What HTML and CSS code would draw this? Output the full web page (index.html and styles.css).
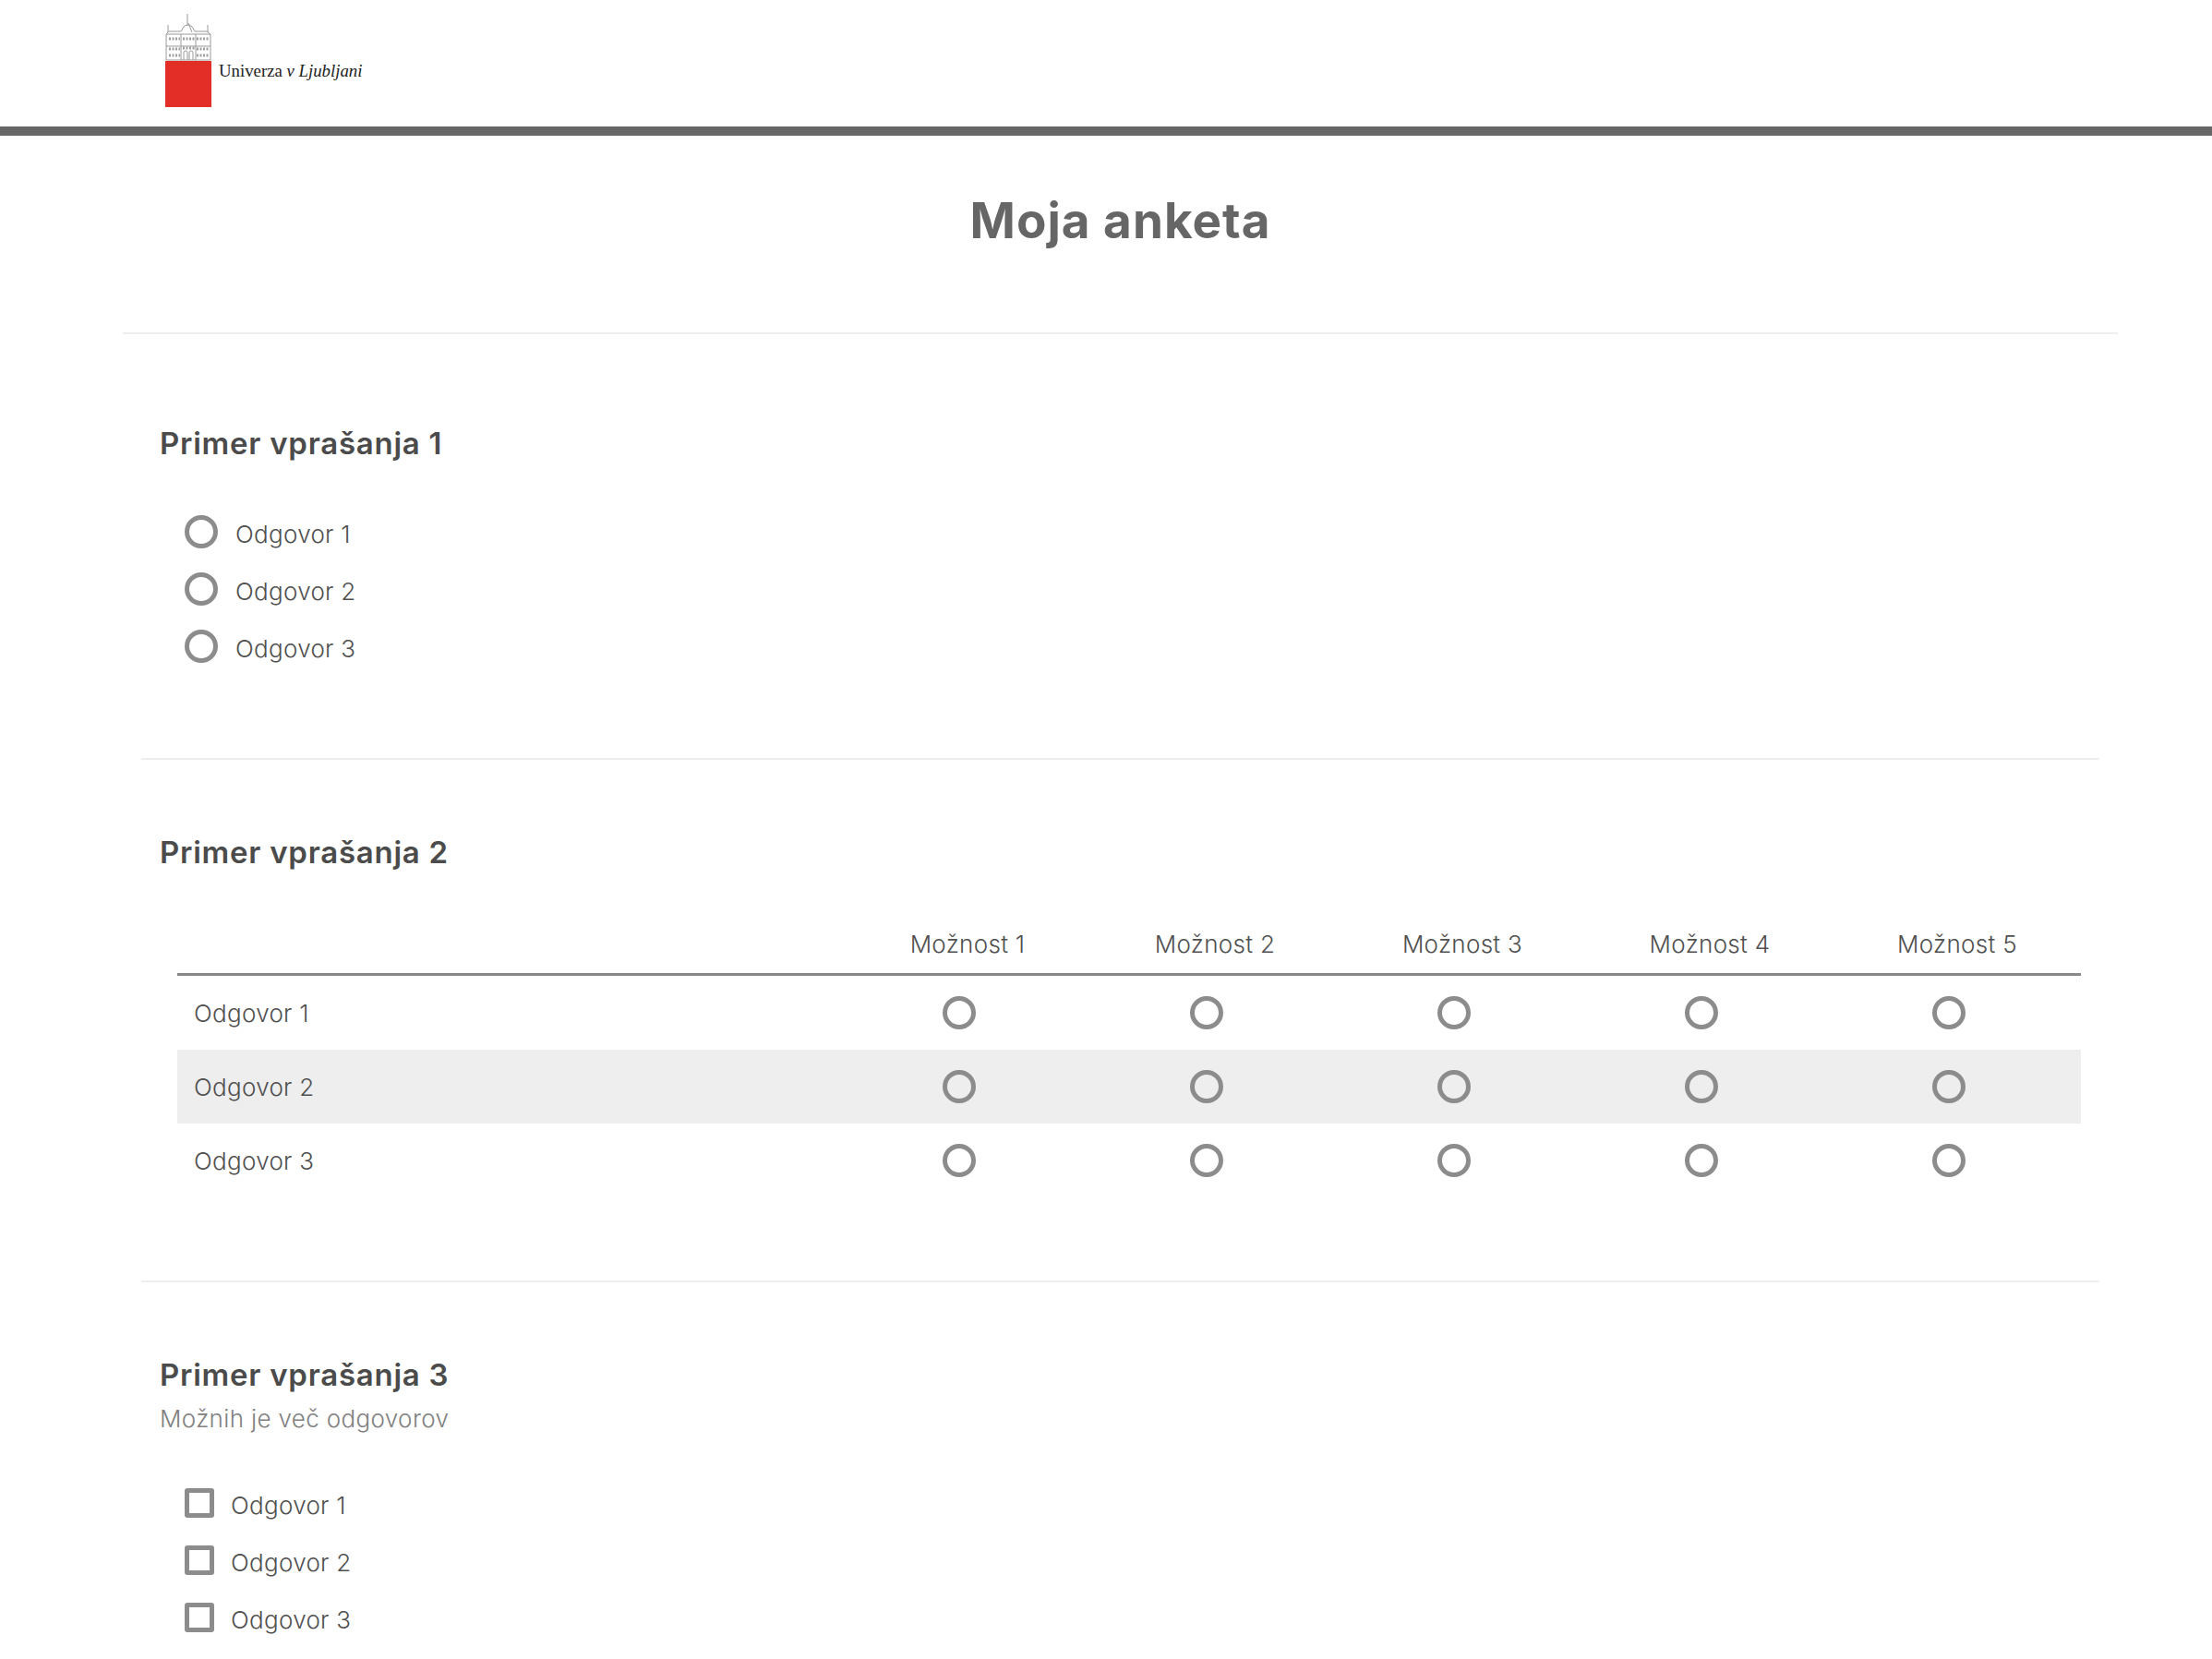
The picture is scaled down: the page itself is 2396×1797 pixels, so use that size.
FILE: index.html
```html
<!DOCTYPE html>
<html lang="sl">
<head>
    <meta charset="UTF-8">
    <meta name="viewport" content="width=device-width, initial-scale=1.0">
    <title>Moja anketa</title>
    <link rel="stylesheet" href="styles.css">
</head>
<body>

    <header class="site-header">
        <div class="logo">
            <div class="logo-mark">
                <svg class="logo-building" viewBox="0 0 50 51" width="50" height="51">
                    <g fill="none" stroke="#9a9a9a" stroke-width="1">
                        <path d="M24 0V13M25 10l4 10M3 12v8M46 12v8"/>
                        <path d="M1 22l3-3h13l3-5a6 6 0 0 1 9 0l3 5h13l4 3"/>
                        <path d="M1 22h48M1 35h48M1 50h48"/>
                        <path d="M1 22v28M49 22v28M17 22v28M33 22v28"/>
                        <path d="M20 50v-8a2 2 0 0 1 4 0v8M26 50v-8a2 2 0 0 1 4 0v8"/>
                    </g>
                    <g fill="none" stroke="#a0a0a0" stroke-width="3" stroke-dasharray="2 1.5">
                        <path d="M4 27h12M34 27h13M4 38h12M34 38h13M4 45h12M34 45h13"/>
                        <path d="M19 27h13M19 37h13"/>
                    </g>
                </svg>
                <div class="logo-red"></div>
            </div>
            <div class="logo-text">Univerza <i>v Ljubljani</i></div>
        </div>
    </header>

    <main class="survey">
        <div class="survey-title">
            <h1>Moja anketa</h1>
        </div>

        <section class="question question-first">
            <h2>Primer vprašanja 1</h2>
            <div class="options">
                <label class="option"><input type="radio" name="q1"><span>Odgovor 1</span></label>
                <label class="option"><input type="radio" name="q1"><span>Odgovor 2</span></label>
                <label class="option"><input type="radio" name="q1"><span>Odgovor 3</span></label>
            </div>
        </section>

        <section class="question question-grid">
            <h2>Primer vprašanja 2</h2>
            <table class="grid">
                <thead>
                    <tr>
                        <th></th>
                        <th>Možnost 1</th>
                        <th>Možnost 2</th>
                        <th>Možnost 3</th>
                        <th>Možnost 4</th>
                        <th>Možnost 5</th>
                    </tr>
                </thead>
                <tbody>
                    <tr>
                        <td>Odgovor 1</td>
                        <td><input type="radio" name="g1"></td>
                        <td><input type="radio" name="g1"></td>
                        <td><input type="radio" name="g1"></td>
                        <td><input type="radio" name="g1"></td>
                        <td><input type="radio" name="g1"></td>
                    </tr>
                    <tr>
                        <td>Odgovor 2</td>
                        <td><input type="radio" name="g2"></td>
                        <td><input type="radio" name="g2"></td>
                        <td><input type="radio" name="g2"></td>
                        <td><input type="radio" name="g2"></td>
                        <td><input type="radio" name="g2"></td>
                    </tr>
                    <tr>
                        <td>Odgovor 3</td>
                        <td><input type="radio" name="g3"></td>
                        <td><input type="radio" name="g3"></td>
                        <td><input type="radio" name="g3"></td>
                        <td><input type="radio" name="g3"></td>
                        <td><input type="radio" name="g3"></td>
                    </tr>
                </tbody>
            </table>
        </section>

        <section class="question question-multi">
            <h2>Primer vprašanja 3</h2>
            <p class="hint">Možnih je več odgovorov</p>
            <div class="options options-check">
                <label class="option"><input type="checkbox"><span>Odgovor 1</span></label>
                <label class="option"><input type="checkbox"><span>Odgovor 2</span></label>
                <label class="option"><input type="checkbox"><span>Odgovor 3</span></label>
            </div>
        </section>
    </main>

</body>
</html>
```

FILE: styles.css
```css
* {
    margin: 0;
    padding: 0;
    box-sizing: border-box;
}

body {
    background: white;
    color: #505050;
    font-family: Inter, "Open Sans", sans-serif;
    font-size: 26px;
    overflow-x: hidden;
}

.site-header {
    height: 147px;
    border-bottom: 10px solid #666666;
    padding: 15px 0 0 179px;
}

.logo {
    display: flex;
    align-items: center;
    gap: 8px;
}

.logo-mark {
    width: 50px;
}

.logo-building {
    display: block;
}

.logo-red {
    height: 50px;
    background: #e32e28;
}

.logo-text {
    font-family: "Liberation Serif", serif;
    font-size: 18.8px;
    color: #222222;
    margin-top: 22px;
    white-space: nowrap;
}

.survey {
    width: 2161px;
    margin-left: 133px;
}

.survey-title {
    height: 215px;
    border-bottom: 2px solid #eeeeee;
    padding-top: 60px;
    text-align: center;
}

h1 {
    font-size: 53px;
    line-height: 64px;
    font-weight: 700;
    color: #666666;
    letter-spacing: 1px;
}

.question {
    margin: 0 20px;
    padding-left: 20px;
    border-bottom: 2px solid #eeeeee;
}

.question-first {
    height: 461px;
    padding-top: 96px;
}

.question-grid {
    height: 566px;
    padding-top: 78px;
}

.question-multi {
    border-bottom: none;
    padding-top: 78px;
}

h2 {
    font-size: 33px;
    line-height: 44px;
    font-weight: 600;
    color: #4b4b4b;
    letter-spacing: 0.75px;
}

.hint {
    font-size: 26px;
    line-height: 36px;
    font-weight: 300;
    color: #808080;
    letter-spacing: 0.35px;
    margin-top: 8px;
}

.options {
    margin-top: 56px;
    padding-left: 27px;
    display: flex;
    flex-direction: column;
    gap: 26px;
}

.options-check {
    margin-top: 55px;
}

.option {
    display: flex;
    align-items: center;
    height: 36px;
    font-weight: 300;
    letter-spacing: 0.3px;
}

input[type="radio"],
input[type="checkbox"] {
    appearance: none;
    display: block;
    flex: none;
    background: transparent;
    border: 5px solid #8c8c8c;
}

input[type="radio"] {
    width: 36px;
    height: 36px;
    border-radius: 50%;
}

input[type="checkbox"] {
    width: 32px;
    height: 32px;
    border-radius: 3px;
}

.option span {
    margin-left: 19px;
    margin-top: 4px;
}

.options-check .option span {
    margin-left: 18px;
}

.grid {
    width: 2062px;
    margin: 59px 0 0 19px;
    border-collapse: separate;
    border-spacing: 0;
    table-layout: fixed;
    font-weight: 300;
    letter-spacing: 0.3px;
}

.grid th {
    width: 268px;
    height: 53px;
    padding-bottom: 14px;
    font-weight: 300;
    border-bottom: 3px solid #888888;
}

.grid th:first-child {
    width: 722px;
}

.grid td {
    height: 80px;
    padding-right: 18px;
}

.grid td:first-child {
    padding: 0 0 0 18px;
}

.grid td input {
    margin: 0 auto;
}

.grid tbody tr:nth-child(2) {
    background: #eeeeee;
}
```
